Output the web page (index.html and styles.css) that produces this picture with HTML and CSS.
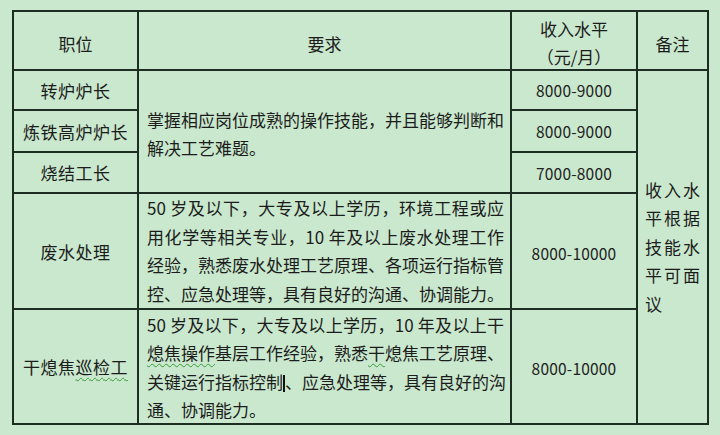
FILE: index.html
```html
<!DOCTYPE html>
<html lang="zh-CN">
<head>
<meta charset="utf-8">
<title>职位表</title>
<link rel="stylesheet" href="styles.css">
</head>
<body>
<div class="table">
  <div class="cell head">职位</div>
  <div class="cell head">要求</div>
  <div class="cell head stack"><div>收入水平</div><div>（元/月）</div></div>
  <div class="cell head">备注</div>

  <div class="cell name r1">转炉炉长</div>
  <div class="cell req merged">
    <div class="line just">掌握相应岗位成熟的操作技能，并且能够判断和</div>
    <div class="line">解决工艺难题。</div>
  </div>
  <div class="cell pay r1">8000-9000</div>
  <div class="cell note">
    <div>收入水</div><div>平根据</div><div>技能水</div><div>平可面</div><div>议</div>
  </div>

  <div class="cell name r2">炼铁高炉炉长</div>
  <div class="cell pay r2">8000-9000</div>

  <div class="cell name r3">烧结工长</div>
  <div class="cell pay r3">7000-8000</div>

  <div class="cell name r4">废水处理</div>
  <div class="cell req r4">
    <div class="line just">50 岁及以下，大专及以上学历，环境工程或应</div>
    <div class="line just">用化学等相关专业，10 年及以上废水处理工作</div>
    <div class="line just">经验，熟悉废水处理工艺原理、各项运行指标管</div>
    <div class="line just">控、应急处理等，具有良好的沟通、协调能力。</div>
  </div>
  <div class="cell pay r4">8000-10000</div>

  <div class="cell name r5">干熄焦<span class="sq">巡检工</span></div>
  <div class="cell req r5">
    <div class="line just">50 岁及以下，大专及以上学历，10 年及以上干</div>
    <div class="line just"><span class="sq">熄焦操作</span>基层工作经验，熟悉<span class="sq">干</span>熄焦工艺原理、</div>
    <div class="line just">关键运行指标控制<span class="caret"></span>、应急处理等，具有良好的沟</div>
    <div class="line">通、协调能力。</div>
  </div>
  <div class="cell pay r5">8000-10000</div>
</div>
</body>
</html>
```
FILE: styles.css
```css
html {
  background: #c9e8cd;
}
body {
  margin: 0;
  padding: 10px 0 0 12px;
  font-family: "Noto Sans CJK SC", "Noto Sans", sans-serif;
  font-size: 17px;
  color: #1c1c1c;
}
.table {
  display: grid;
  width: 697px;
  box-sizing: border-box;
  grid-template-columns: 123px 371px 124px 69px;
  grid-template-rows: 57px 38px 40px 39px 114px 113px;
  gap: 2px;
  padding: 2px;
  background: #1e2d21;
}
.cell {
  background: #c9e8cd;
  display: flex;
  align-items: center;
  justify-content: center;
}
.head {
  padding-top: 5px;
}
.stack {
  flex-direction: column;
  line-height: 28px;
}
.name {
  grid-column: 1;
  letter-spacing: 0.5px;
}
.r1 { grid-row: 2; }
.r2 { grid-row: 3; }
.r3 { grid-row: 4; }
.r4 { grid-row: 5; }
.r5 { grid-row: 6; }
.req {
  grid-column: 2;
  flex-direction: column;
  align-items: stretch;
  padding: 0 6px 0 8px;
  line-height: 28.5px;
}
.merged {
  grid-row: 2 / span 3;
  padding-top: 5px;
}
.r5.req {
  padding-top: 2px;
}
.line {
  white-space: nowrap;
  text-align: left;
}
.line.just {
  text-align: justify;
  text-align-last: justify;
}
.pay {
  grid-column: 3;
  font-size: 15.5px;
  letter-spacing: 0.2px;
  color: #222;
}
.r4.pay, .r5.pay {
  padding-top: 3px;
}
.note {
  grid-column: 4;
  grid-row: 2 / span 5;
  flex-direction: column;
  align-items: flex-start;
  padding-left: 7px;
  line-height: 28.5px;
  letter-spacing: 2px;
}
.sq {
  text-decoration: underline wavy #3a9a3a;
  text-decoration-thickness: 1px;
  text-underline-offset: 3px;
}
.caret {
  display: inline-block;
  width: 0;
  height: 17px;
  border-left: 2px solid #111;
  vertical-align: -3px;
}
```
